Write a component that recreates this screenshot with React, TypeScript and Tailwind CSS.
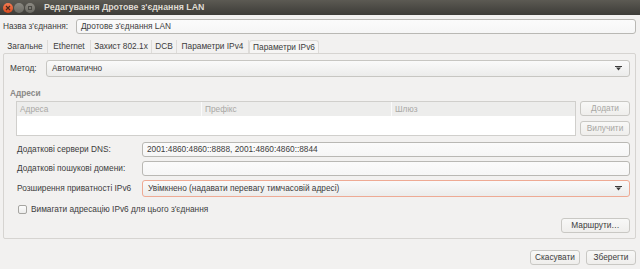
import { useState } from "react";

const font = "[font-family:'Liberation_Sans','Noto_Sans',sans-serif]";

function Field({ value, className = "" }: { value?: string; className?: string }) {
  return (
    <div
      className={`h-full flex items-center px-[4px] rounded-[3px] border border-[#b9b8b4] bg-gradient-to-b from-[#fbfbfb] to-[#f6f6f6] text-[#3c3c3c] ${className}`}
    >
      {value}
    </div>
  );
}

function Combo({ value, accent }: { value: string; accent?: boolean }) {
  return (
    <div
      className={`h-full flex-1 flex items-center justify-between px-[5px] rounded-[3px] border bg-gradient-to-b from-[#fafafa] to-[#ececeb] text-[#3c3c3c] ${
        accent ? "border-[#eeaa94]" : "border-[#c7c6c2]"
      }`}
    >
      <span>{value}</span>
      <svg width="7" height="5" viewBox="0 0 7 5" className="mr-[2px]">
        <rect x="0" y="0" width="7" height="1" fill="#3c3c3c" />
        <path d="M1 1.5 L6 1.5 L3.5 4.5 Z" fill="#3c3c3c" />
      </svg>
    </div>
  );
}

function Btn({ label, disabled, className = "" }: { label: string; disabled?: boolean; className?: string }) {
  return (
    <button
      className={`flex items-center justify-center rounded-[3px] border border-[#c9c8c4] bg-gradient-to-b from-[#f8f8f7] to-[#efeeec] ${
        disabled ? "text-[#a8a7a3]" : "text-[#3c3c3c]"
      } ${className}`}
    >
      {label}
    </button>
  );
}

export default function App() {
  const [checked, setChecked] = useState(false);
  const tabs = ["Загальне", "Ethernet", "Захист 802.1x", "DCB", "Параметри IPv4", "Параметри IPv6"];
  const tabWidths = ["w-[45px]", "w-[43px]", "w-[61px]", "w-[25px]", "w-[72px]", "w-[70px]"];

  return (
    <div
      className={`w-[640px] h-[269px] bg-[#f2f1f0] flex flex-col text-[8.3px] text-[#3c3c3c] whitespace-nowrap overflow-hidden ${font}`}
    >
      {/* Title bar */}
      <div className="h-[15px] shrink-0 flex items-center bg-gradient-to-b from-[#5c5a53] to-[#3d3c38] pl-[3px]">
        <div className="w-[10px] h-[10px] rounded-full bg-gradient-to-b from-[#f37b52] to-[#d9491a] flex items-center justify-center">
          <svg width="6" height="6" viewBox="0 0 6 6">
            <path d="M1 1 L5 5 M5 1 L1 5" stroke="#4a2a1c" strokeWidth="1.2" />
          </svg>
        </div>
        <div className="w-[10px] h-[10px] rounded-full bg-gradient-to-b from-[#8c8a83] to-[#6b6a63] ml-[1px]" />
        <div className="w-[10px] h-[10px] rounded-full bg-gradient-to-b from-[#8c8a83] to-[#6b6a63] ml-[1px] flex items-center justify-center">
          <div className="w-[4px] h-[4px] border border-[#4b4a45]" />
        </div>
        <span className="ml-[9px] font-bold text-[#dfdbd2] text-[8.8px]">Редагування Дротове з'єднання LAN</span>
      </div>

      {/* Name row */}
      <div className="mt-[4px] h-[15px] shrink-0 flex items-center pl-[3px] pr-[4px]">
        <span className="w-[73px]">Назва з'єднання:</span>
        <Field value="Дротове з'єднання LAN" className="flex-1" />
      </div>

      {/* Tabs */}
      <div className="mt-[6px] h-[13px] shrink-0 flex pl-[3px] z-10">
        {tabs.map((t, i) => (
          <div
            key={t}
            className={`${tabWidths[i]} h-full flex items-center justify-center border-r border-[#dedcd9] ${
              i === 5 ? "bg-[#f6f5f4] border-t border-l border-[#d4d2cf] rounded-t-[3px]" : ""
            }`}
          >
            {t}
          </div>
        ))}
      </div>

      {/* Panel */}
      <div className="ml-[3px] mr-[4px] h-[186px] shrink-0 border border-[#d6d4d1] rounded-[2px] flex flex-col pl-[6px] pr-[5px]">
        <div className="mt-[6px] h-[17px] flex items-center">
          <span className="w-[36px]">Метод:</span>
          <Combo value="Автоматично" />
        </div>

        <div className="mt-[10px] h-[12px] flex items-center font-bold text-[#8a8987]">Адреси</div>

        <div className="mt-[2px] h-[35px] flex pl-[6px]">
          <div className="w-[560px] border border-[#d0cfcc] bg-white flex flex-col">
            <div className="h-[14px] flex bg-[#ededec] text-[#a9a8a5]">
              <div className="w-[185px] pl-[3px] flex items-center border-r border-[#fafafa]">Адреса</div>
              <div className="w-[190px] pl-[3px] flex items-center border-r border-[#fafafa]">Префікс</div>
              <div className="flex-1 pl-[3px] flex items-center">Шлюз</div>
            </div>
          </div>
          <div className="ml-[4px] flex-1 flex flex-col justify-between">
            <Btn label="Додати" disabled className="h-[15px]" />
            <Btn label="Вилучити" disabled className="h-[15px]" />
          </div>
        </div>

        <div className="mt-[6px] h-[15px] flex items-center pl-[7px]">
          <span className="w-[125px]">Додаткові сервери DNS:</span>
          <Field value="2001:4860:4860::8888, 2001:4860:4860::8844" className="flex-1" />
        </div>

        <div className="mt-[4px] h-[15px] flex items-center pl-[7px]">
          <span className="w-[125px]">Додаткові пошукові домени:</span>
          <Field className="flex-1" />
        </div>

        <div className="mt-[4px] h-[17px] flex items-center pl-[7px]">
          <span className="w-[125px]">Розширення приватності IPv6</span>
          <Combo value="Увімкнено (надавати перевагу тимчасовій адресі)" accent />
        </div>

        <label className="mt-[6px] h-[12px] flex items-center pl-[8px] cursor-pointer">
          <input
            type="checkbox"
            checked={checked}
            onChange={(e) => setChecked(e.target.checked)}
            className="appearance-none w-[9px] h-[9px] rounded-[2px] border border-[#a6a5a1] bg-gradient-to-b from-[#fdfdfd] to-[#ececeb]"
          />
          <span className="ml-[4px]">Вимагати адресацію IPv6 для цього з'єднання</span>
        </label>

        <div className="mt-[3px] h-[15px] flex justify-end">
          <Btn label="Маршрути…" className="w-[69px] h-full" />
        </div>
      </div>

      {/* Footer */}
      <div className="mt-[11px] h-[15px] flex justify-end gap-[6px] pr-[4px]">
        <Btn label="Скасувати" className="w-[50px] h-full" />
        <Btn label="Зберегти" className="w-[50px] h-full" />
      </div>
    </div>
  );
}
